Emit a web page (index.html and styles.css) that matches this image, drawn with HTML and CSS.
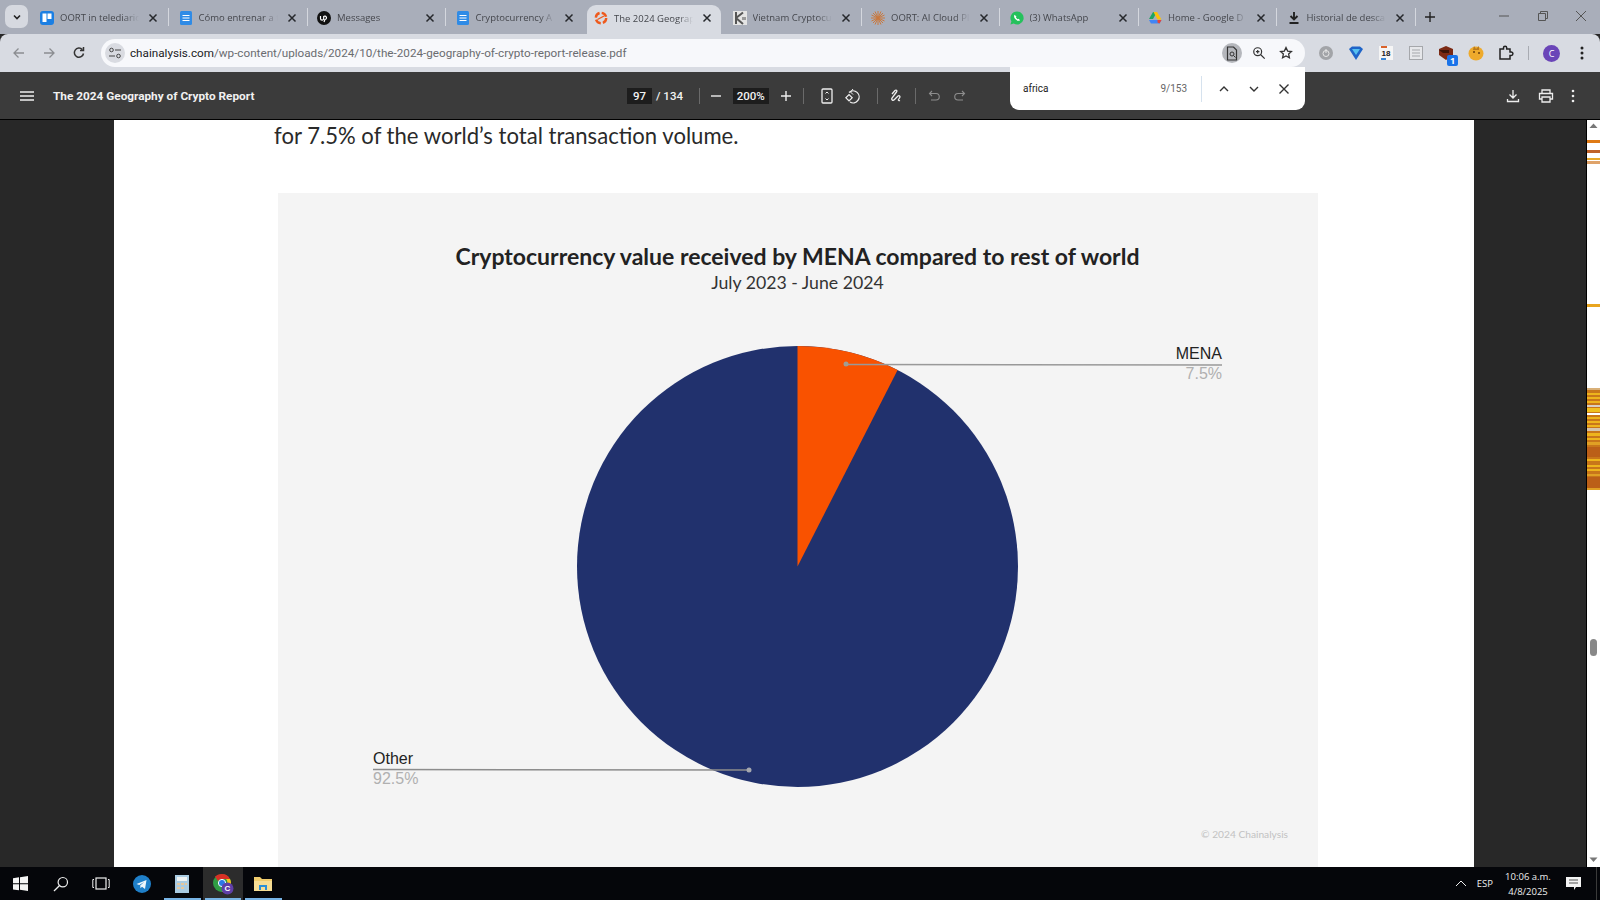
FILE: index.html
```html
<!DOCTYPE html>
<html lang="es">
<head>
    <meta charset="UTF-8">
    <title>The 2024 Geography of Crypto Report</title>
    <link rel="stylesheet" href="styles.css">
</head>
<body>

    <svg class="defs"><symbol id="close" viewBox="0 0 10 10"><path d="M1.500 1.500l7 7M8.500 1.500l-7 7" stroke="#26282c" stroke-width="1.500"/></symbol></svg>

    <!-- Tabs -->
    <div class="tabstrip">
        <div class="tab-search"><svg width="12" height="12" viewBox="0 0 12 12"><path d="M3 4.500l3 3 3-3" fill="none" stroke="#222" stroke-width="1.600"/></svg></div>
        <div class="tab">
            <svg class="fav" viewBox="0 0 14 14"><rect width="14" height="14" rx="3" fill="#1b7fe3"/><rect x="2.500" y="2.500" width="4" height="8.500" fill="#fff"/><rect x="7.500" y="2.500" width="4" height="5.500" fill="#fff"/></svg>
            <span class="tab-title">OORT in telediario</span><svg class="tab-x"><use href="#close"/></svg>
        </div>
        <div class="tab">
            <svg class="fav" viewBox="0 0 14 14"><rect x="1" width="12" height="14" rx="1.500" fill="#2f8be6"/><path d="M3.500 4.500h7M3.500 7h7M3.500 9.500h7" stroke="#fff" stroke-width="1.200"/></svg>
            <span class="tab-title">Cómo entrenar a t</span><svg class="tab-x"><use href="#close"/></svg>
        </div>
        <div class="tab">
            <svg class="fav" viewBox="0 0 14 14"><circle cx="7" cy="7" r="7" fill="#111"/><path d="M3.500 5v2.500a1.600 1.600 0 0 0 3.200 0V5.500a1.700 1.700 0 1 1 1.200 3L7 11" fill="none" stroke="#fff" stroke-width="1.200"/></svg>
            <span class="tab-title">Messages</span><svg class="tab-x"><use href="#close"/></svg>
        </div>
        <div class="tab">
            <svg class="fav" viewBox="0 0 14 14"><rect x="1" width="12" height="14" rx="1.500" fill="#2f8be6"/><path d="M3.500 4.500h7M3.500 7h7M3.500 9.500h7" stroke="#fff" stroke-width="1.200"/></svg>
            <span class="tab-title">Cryptocurrency A</span><svg class="tab-x"><use href="#close"/></svg>
        </div>
        <div class="tab active">
            <svg class="fav" viewBox="0 0 14 14"><circle cx="7" cy="7" r="5.200" fill="none" stroke="#ee5a1d" stroke-width="2.400" stroke-dasharray="6 2.200"/><path d="M3.500 8.500L10 5" stroke="#ee5a1d" stroke-width="1.400"/></svg>
            <span class="tab-title">The 2024 Geograp</span><svg class="tab-x"><use href="#close"/></svg>
        </div>
        <div class="tab">
            <svg class="fav" viewBox="0 0 14 14"><rect width="14" height="14" fill="#e4e4e4"/><path d="M3 1v12M3 7l7-5.500M3 7l7 6" stroke="#555" stroke-width="2"/><rect x="9" y="6" width="4" height="3" fill="#999"/></svg>
            <span class="tab-title">Vietnam Cryptocu</span><svg class="tab-x"><use href="#close"/></svg>
        </div>
        <div class="tab">
            <svg class="fav" viewBox="0 0 14 14"><path d="M7 0v14M0 7h14M2 2l10 10M12 2L2 12M4 .5l6 13M10 .5l-6 13M.5 4l13 6M.5 10l13-6" stroke="#c9793f" stroke-width="1"/></svg>
            <span class="tab-title">OORT: AI Cloud Pl</span><svg class="tab-x"><use href="#close"/></svg>
        </div>
        <div class="tab">
            <svg class="fav" viewBox="0 0 14 14"><path d="M7 .5a6.500 6.500 0 0 0-5.600 9.800L.5 13.500l3.300-.9A6.500 6.500 0 1 0 7 .5z" fill="#25c15c"/><path d="M4.600 3.800c-1 1 -.6 2.800 1 4.500s3.500 2 4.400 1l-1.400-1.500-1 .5-1.700-1.700.5-1z" fill="#fff"/></svg>
            <span class="tab-title">(3) WhatsApp</span><svg class="tab-x"><use href="#close"/></svg>
        </div>
        <div class="tab">
            <svg class="fav" viewBox="0 0 14 14"><path d="M5 1h4l-4 7H1z" fill="#1fa463"/><path d="M9 1l4.500 7.500h-4L5.500 1z" fill="#ffc107"/><path d="M1 9h12.500l-2 3.500H3z" fill="#4285f4"/><path d="M9.500 9h4l-2 3.500-2-1z" fill="#ea4335"/></svg>
            <span class="tab-title">Home - Google D</span><svg class="tab-x"><use href="#close"/></svg>
        </div>
        <div class="tab">
            <svg class="fav" viewBox="0 0 14 14"><path d="M7 1v7M3.500 5L7 8.500 10.500 5M2.500 12h9" fill="none" stroke="#222" stroke-width="1.900"/></svg>
            <span class="tab-title">Historial de desca</span><svg class="tab-x"><use href="#close"/></svg>
        </div>
        <div class="tab-new">
            <svg width="12" height="12" viewBox="0 0 12 12"><path d="M6 1v10M1 6h10" stroke="#222" stroke-width="1.400"/></svg>
        </div>
        <div class="win-controls">
            <svg width="12" height="12" viewBox="0 0 12 12"><path d="M1 6h10" stroke="#555"/></svg>
            <svg width="12" height="12" viewBox="0 0 12 12"><path d="M1.500 3.500h7v7h-7zM3.500 3.500v-2h7v7h-2" fill="none" stroke="#555"/></svg>
            <svg width="12" height="12" viewBox="0 0 12 12"><path d="M1 1l10 10M11 1L1 11" stroke="#555"/></svg>
        </div>
    </div>

    <!-- Address bar -->
    <div class="toolbar">
        <div class="nav-btn"><svg width="14" height="14" viewBox="0 0 14 14"><path d="M12 7H2M6.500 2.500L2 7l4.500 4.500" fill="none" stroke="#8b8d91" stroke-width="1.300"/></svg></div>
        <div class="nav-btn"><svg width="14" height="14" viewBox="0 0 14 14"><path d="M2 7h10M7.500 2.500L12 7l-4.500 4.500" fill="none" stroke="#8b8d91" stroke-width="1.300"/></svg></div>
        <div class="nav-btn"><svg width="14" height="14" viewBox="0 0 14 14"><path d="M11.500 7.500A4.600 4.600 0 1 1 10.300 3.500M11.500 1v3.500H8" fill="none" stroke="#333" stroke-width="1.500"/></svg></div>
        <div class="omnibox">
            <div class="site-info"><svg width="14" height="12" viewBox="0 0 14 12"><circle cx="3.500" cy="3" r="1.800" fill="none" stroke="#444"/><path d="M7 3h6M1 9h6" stroke="#444" stroke-width="1.200"/><circle cx="10.500" cy="9" r="1.800" fill="none" stroke="#444"/></svg></div>
            <div class="url"><span>chainalysis.com</span>/wp-content/uploads/2024/10/the-2024-geography-of-crypto-report-release.pdf</div>
            <div class="omni-pdf"><svg width="14" height="15" viewBox="0 0 14 15"><path d="M2.500 1h6l3 3v10h-9z" fill="none" stroke="#333" stroke-width="1.200"/><circle cx="7" cy="8" r="2" fill="none" stroke="#333"/><path d="M8.500 9.500l2 2" stroke="#333"/></svg></div>
            <div class="omni-icon"><svg width="14" height="14" viewBox="0 0 16 16"><circle cx="6.500" cy="6.500" r="4.500" fill="none" stroke="#333" stroke-width="1.400"/><path d="M10 10l4.500 4.500M4.500 6.500h4M6.500 4.500v4" stroke="#333" stroke-width="1.400"/></svg></div>
            <div class="omni-icon"><svg width="14" height="14" viewBox="0 0 16 16"><path d="M8 1.800l1.900 4 4.300.500-3.200 2.900.9 4.300L8 11.300l-3.900 2.200.9-4.300-3.200-2.900 4.300-.500z" fill="none" stroke="#333" stroke-width="1.500"/></svg></div>
        </div>
        <div class="ext-row">
            <div class="ext"><svg width="16" height="16" viewBox="0 0 16 16"><circle cx="8" cy="8" r="7" fill="#a2a4a8"/><circle cx="8" cy="8.500" r="3" fill="none" stroke="#e8e8e8"/><path d="M8 4v4" stroke="#e8e8e8"/></svg></div>
            <div class="ext"><svg width="16" height="16" viewBox="0 0 16 16"><path d="M1 4l3-2.500h8L15 4 8 15z" fill="#1f64c8"/><path d="M4 4h8L8 10z" fill="#56c0f0"/></svg></div>
            <div class="ext"><svg width="16" height="16" viewBox="0 0 16 16"><rect x="1" y="1" width="14" height="14" fill="#f5f5f5"/><rect x="3" y="1" width="6" height="2" fill="#d9622b"/><rect x="3" y="13" width="5" height="2" fill="#3b86d6"/><text x="8" y="11" class="ext-num">18</text></svg></div>
            <div class="ext"><svg width="16" height="16" viewBox="0 0 16 16"><rect x="1.500" y="1.500" width="13" height="13" fill="#e6e7ea" stroke="#a5a7ab"/><path d="M4 5h8M4 8h8M4 11h8" stroke="#a5a7ab"/></svg></div>
            <div class="ext ext-badged"><svg width="16" height="16" viewBox="0 0 16 16"><path d="M1 4l7-3 7 3v6l-7 5-7-5z" fill="#7c2a14"/><path d="M1 5h10v3H5z" fill="#3b1509"/></svg><span class="ext-badge">1</span></div>
            <div class="ext"><svg width="18" height="18" viewBox="0 0 18 18"><ellipse cx="9" cy="9.500" rx="7.500" ry="7" fill="#eeaa2c"/><path d="M7 2l2 3 3-3v4H6z" fill="#b9791b"/><circle cx="7" cy="8" r="1" fill="#6b3f0c"/><circle cx="12" cy="9" r="1" fill="#6b3f0c"/></svg></div>
            <div class="ext"><svg width="16" height="16" viewBox="0 0 16 16"><path d="M2 4h3.500V2.800a1.600 1.600 0 0 1 3.200 0V4H12v3h1.200a1.700 1.700 0 0 1 0 3.400H12V14H2z" fill="none" stroke="#222" stroke-width="1.500"/></svg></div>
            <div class="ext-sep"></div>
            <div class="avatar">C</div>
            <svg class="ext-dots" width="4" height="14" viewBox="0 0 4 14"><circle cx="2" cy="2" r="1.500" fill="#222"/><circle cx="2" cy="7" r="1.500" fill="#222"/><circle cx="2" cy="12" r="1.500" fill="#222"/></svg>
        </div>
    </div>

    <!-- PDF viewer toolbar -->
    <div class="pdfbar">
        <div class="pdf-left">
            <svg class="pdf-menu" width="14" height="10" viewBox="0 0 14 10"><path d="M0 1h14M0 5h14M0 9h14" stroke="#f1f1f1" stroke-width="1.400"/></svg>
            <span class="pdf-title">The 2024 Geography of Crypto Report</span>
        </div>
        <div class="pdf-center">
            <span class="pdf-input page-input">97</span>
            <span class="pdf-pages">/ 134</span>
            <span class="pdf-sep"></span>
            <svg class="pdf-ic ic-minus" width="12" height="12" viewBox="0 0 12 12"><path d="M1 6h10" stroke="#eee" stroke-width="1.400"/></svg>
            <span class="pdf-input zoom-input">200%</span>
            <svg class="pdf-ic ic-plus" width="12" height="12" viewBox="0 0 12 12"><path d="M1 6h10M6 1v10" stroke="#eee" stroke-width="1.400"/></svg>
            <span class="pdf-sep sep-b"></span>
            <svg class="pdf-ic ic-fit" width="12" height="16" viewBox="0 0 12 16"><rect x="1" y="1" width="10" height="14" rx="1" fill="none" stroke="#eee" stroke-width="1.300"/><path d="M4.500 5.500L6 4l1.500 1.500M4.500 10.500L6 12l1.500-1.500" fill="none" stroke="#eee"/></svg>
            <svg class="pdf-ic ic-rotate" width="16" height="16" viewBox="0 0 16 16"><path d="M4 4.500A6 6 0 1 1 5 14" fill="none" stroke="#eee" stroke-width="1.300"/><path d="M8 1L5.500 4 8 6.500" fill="none" stroke="#eee"/><rect x="1.800" y="7.500" width="4.500" height="4.500" transform="rotate(45 4 9.750)" fill="none" stroke="#eee" stroke-width="1.200"/></svg>
            <span class="pdf-sep sep-c"></span>
            <svg class="pdf-ic ic-draw" width="14" height="14" viewBox="0 0 14 14"><path d="M3 5l3-3.500c1-1 2.500 0 1.500 1.500L3 9c-1 2 1 3 2.500 1.500L9 7c1.500-1 2.500.5 1.500 2l-1 1.500c-.5 1 .5 1.500 1.500 1" fill="none" stroke="#eee" stroke-width="1.300"/></svg>
            <span class="pdf-sep sep-d"></span>
            <svg class="pdf-ic ic-undo" width="12" height="12" viewBox="0 0 12 12"><path d="M4 1L1.500 3.500 4 6M1.500 3.500H8a3 3 0 0 1 0 6.500H3" fill="none" stroke="#8d8d8d" stroke-width="1.100"/></svg>
            <svg class="pdf-ic ic-redo" width="12" height="12" viewBox="0 0 12 12"><path d="M8 1l2.500 2.500L8 6M10.500 3.500H4a3 3 0 0 0 0 6.500h5" fill="none" stroke="#8d8d8d" stroke-width="1.100"/></svg>
        </div>
        <div class="pdf-right">
            <svg width="14" height="14" viewBox="0 0 14 14"><path d="M7 1v8M3.500 5.500L7 9l3.500-3.500M1.500 10v2.500h11V10" fill="none" stroke="#eee" stroke-width="1.300"/></svg>
            <svg width="16" height="14" viewBox="0 0 16 14"><path d="M4 4V1h8v3M4 10H1.500V4.500h13V10H12M4 8h8v5H4z" fill="none" stroke="#eee" stroke-width="1.300"/></svg>
            <svg width="4" height="14" viewBox="0 0 4 14"><circle cx="2" cy="2" r="1.300" fill="#eee"/><circle cx="2" cy="7" r="1.300" fill="#eee"/><circle cx="2" cy="12" r="1.300" fill="#eee"/></svg>
        </div>
    </div>

    <!-- Find in page -->
    <div class="findbar">
        <span class="find-text">africa</span>
        <span class="find-count">9/153</span>
        <span class="find-sep"></span>
        <svg width="12" height="12" viewBox="0 0 12 12"><path d="M2 8l4-4 4 4" fill="none" stroke="#333" stroke-width="1.400"/></svg>
        <svg width="12" height="12" viewBox="0 0 12 12"><path d="M2 4l4 4 4-4" fill="none" stroke="#333" stroke-width="1.400"/></svg>
        <svg width="12" height="12" viewBox="0 0 12 12"><path d="M1.500 1.500l9 9M10.500 1.500l-9 9" stroke="#333" stroke-width="1.400"/></svg>
    </div>

    <!-- Document -->
    <div class="viewer">
        <div class="gutter-left"></div>
        <div class="page">
            <p class="page-text">for 7.5% of the world’s total transaction volume.</p>
            <div class="chart">
                <h3 class="chart-title">Cryptocurrency value received by MENA compared to rest of world</h3>
                <p class="chart-sub">July 2023 - June 2024</p>
                <svg class="chart-svg" width="1040" height="560" viewBox="0 0 1040 560">
                    <circle cx="519.500" cy="267.500" r="220.500" fill="#21316d"/>
                    <path d="M519.500 267.500V47A220.500 220.500 0 0 1 619.600 71z" fill="#f95200"/>
                    <path d="M568 65.500L944 66" stroke="#999" stroke-width="1.400"/>
                    <circle cx="568" cy="65" r="2.500" fill="#a09d93"/>
                    <text x="944" y="60" class="lbl-name" text-anchor="end">MENA</text>
                    <text x="944" y="80" class="lbl-val" text-anchor="end">7.5%</text>
                    <path d="M95 470.500L471 471" stroke="#8c8c8c" stroke-width="1.400"/>
                    <circle cx="471" cy="471" r="2.500" fill="#a5a8b0"/>
                    <text x="95" y="465" class="lbl-name">Other</text>
                    <text x="95" y="485" class="lbl-val">92.5%</text>
                    <text x="1010" y="539" class="chart-copy" text-anchor="end">© 2024 Chainalysis</text>
                </svg>
            </div>
        </div>
        <div class="gutter-right"></div>
        <div class="scrollbar">
            <svg class="scroll-svg" width="13" height="747" viewBox="0 0 13 747">
                <path d="M6.500 3.500l4 4.500h-8z" fill="#777"/>
                <path d="M6.500 742l4-4.500h-8z" fill="#777"/>
                <rect y="20" width="13" height="3" fill="#df7a16"/>
                <rect y="30" width="13" height="3" fill="#c0632a"/>
                <rect y="38" width="13" height="2" fill="#e8a92a"/>
                <rect y="41" width="13" height="3" fill="#dfa36a"/>
                <rect y="184" width="13" height="3" fill="#e9a51f"/>
                <!-- matches block further down the document -->
                <rect y="268" width="13" height="102" fill="#c8761a"/>
                <rect y="268" width="13" height="2" fill="#d9b078"/>
                <rect y="273" width="13" height="2" fill="#eeb41c"/>
                <rect y="277" width="13" height="2" fill="#eeb41c"/>
                <rect y="281" width="13" height="2" fill="#eeb41c"/>
                <rect y="285" width="13" height="2" fill="#d8cfc2"/>
                <rect y="288" width="13" height="4" fill="#f0c020"/>
                <rect y="293" width="13" height="2" fill="#fff"/>
                <rect y="297" width="13" height="2" fill="#eeb41c"/>
                <rect y="301" width="13" height="2" fill="#eeb41c"/>
                <rect y="305" width="13" height="2" fill="#eeb41c"/>
                <rect y="308" width="13" height="3" fill="#d4c4ae"/>
                <rect y="313" width="13" height="3" fill="#eeb41c"/>
                <rect y="318" width="13" height="2" fill="#eeb41c"/>
                <rect y="322" width="13" height="3" fill="#e0a024"/>
                <rect y="327" width="13" height="10" fill="#bb5f18"/>
                <rect y="339" width="13" height="2" fill="#eeb41c"/>
                <rect y="345" width="13" height="2" fill="#eeb41c"/>
                <rect y="349" width="13" height="2" fill="#eeb41c"/>
                <rect y="354" width="13" height="2" fill="#e0a024"/>
                <rect y="357" width="13" height="11" fill="#bb5f18"/>
                <rect y="368" width="13" height="2" fill="#e0a024"/>
                <rect x="3" y="519" width="7" height="17" rx="3.500" fill="#888"/>
            </svg>
        </div>
    </div>

    <!-- Windows taskbar -->
    <div class="taskbar">
        <div class="task-btn"><svg width="15" height="15" viewBox="0 0 15 15"><path d="M0 2.200l6-.9v6H0zM7 1.200L15 0v7.300H7zM0 8.300h6v6l-6-.9zM7 8.300h8V15l-8-1.200z" fill="#f5f5f5"/></svg></div>
        <div class="task-btn"><svg width="16" height="16" viewBox="0 0 16 16"><circle cx="9.800" cy="6.200" r="4.700" fill="none" stroke="#eee" stroke-width="1.200"/><path d="M6.300 9.700L1 15" stroke="#eee" stroke-width="1.300"/></svg></div>
        <div class="task-btn"><svg width="18" height="13" viewBox="0 0 18 13"><rect x="4" y="1" width="10" height="11" fill="none" stroke="#eee" stroke-width="1.200"/><path d="M2 2.500H.8v8H2M16 2.500h1.200v8H16" fill="none" stroke="#eee"/></svg></div>
        <div class="task-btn"><svg width="18" height="18" viewBox="0 0 18 18"><circle cx="9" cy="9" r="9" fill="#1f7fc9"/><path d="M3.500 9l10-4-1.500 9-3-2.200-1.500 1.500-.3-2.800 4-3.500-5 3z" fill="#f0f6fb"/></svg></div>
        <div class="task-btn task-open"><svg width="14" height="18" viewBox="0 0 14 18"><rect width="14" height="18" fill="#a9cbe2"/><rect x="2" y="2" width="10" height="4" fill="#eef2f2"/><path d="M2 8h3v2H2zM6 8h3v2H6zM10 8h2v2h-2zM2 12h3v2H2zM6 12h3v2H6z" fill="#e5c79e"/></svg></div>
        <div class="task-btn task-open task-active">
            <svg width="22" height="22" viewBox="0 0 22 22"><circle cx="10" cy="10" r="9" fill="#2f9e44"/><path d="M10 1a9 9 0 0 1 8 5H10a4 4 0 0 0-4 2L3 3.500A9 9 0 0 1 10 1z" fill="#d93025"/><path d="M18 6a9 9 0 0 1-8 13l4-7a4 4 0 0 0 0-6z" fill="#f8c31a"/><circle cx="10" cy="10" r="3.600" fill="#2c79e6" stroke="#fff" stroke-width="1"/><circle cx="15.500" cy="15.500" r="6" fill="#5f3fa8"/><text x="15.500" y="18.300" class="chrome-c" text-anchor="middle">C</text></svg>
        </div>
        <div class="task-btn task-open"><svg width="18" height="16" viewBox="0 0 18 16"><path d="M0 1h6l2 2h10v12H0z" fill="#f0cc6d"/><rect y="5" width="18" height="10" fill="#f7dd94"/><path d="M5 9h8v5h-2v-3H7v3H5z" fill="#2a8fd8"/></svg></div>
        <div class="tray">
            <svg width="12" height="7" viewBox="0 0 12 7"><path d="M1 6l5-5 5 5" fill="none" stroke="#eee"/></svg>
            <span class="tray-lang">ESP</span>
            <div class="tray-clock"><span>10:06 a.m.</span><span>4/8/2025</span></div>
            <svg class="tray-note" width="15" height="14" viewBox="0 0 15 14"><path d="M0 0h15v10h-5l-2 3V10H0z" fill="#f4f4f4"/><path d="M3 3h9M3 6h9" stroke="#555"/></svg>
            <span class="tray-peek"></span>
        </div>
    </div>

</body>
</html>
```
FILE: styles.css
```css
/* Browser window */
html, body {
    margin: 0;
    height: 100%;
}
body {
    position: relative;
    width: 1600px;
    height: 900px;
    overflow: hidden;
    display: flex;
    flex-direction: column;
    font-family: "Open Sans", "Liberation Sans", sans-serif;
    background-color: #282828;
}
.defs {
    display: none;
}

/* Tabs */
.tabstrip {
    height: 34px;
    flex: none;
    display: flex;
    align-items: center;
    background-color: #a9aeba;
    padding-left: 5px;
    box-sizing: border-box;
}
.tab-search {
    width: 23px;
    height: 23px;
    margin-right: 2.500px;
    margin-top: -1px;
    border-radius: 7px;
    background-color: #d6d9e0;
    display: flex;
    align-items: center;
    justify-content: center;
}
.tab {
    position: relative;
    width: 138.500px;
    height: 34px;
    flex: none;
    box-sizing: border-box;
    padding: 1px 0 0 9.500px;
    display: flex;
    align-items: center;
}
.tab::after {
    content: "";
    position: absolute;
    right: 0;
    top: 8px;
    bottom: 8px;
    width: 1px;
    background-color: #d4d7de;
}
.tab:nth-child(5)::after, .tab.active::after {
    display: none;
}
.tab.active {
    width: 133.500px;
    height: 29px;
    margin: 5px 2.500px 0;
    padding: 0 0 3px 7px;
    background-color: #d8dbe2;
    border-radius: 9px 9px 0 0;
}
.fav {
    width: 14px;
    height: 14px;
    flex: none;
}
.tab-title {
    margin-left: 6px;
    width: 84px;
    flex: none;
    font-size: 9.500px;
    color: #45474d;
    white-space: nowrap;
    overflow: hidden;
    -webkit-mask-image: linear-gradient(to right, #000 76%, transparent 94%);
    mask-image: linear-gradient(to right, #000 76%, transparent 94%);
}
.tab-x {
    width: 10px;
    height: 10px;
    flex: none;
    margin-left: 4px;
}
.tab-new {
    margin: -1px 0 0 8px;
    display: flex;
}
.win-controls {
    margin: -2px 0 0 auto;
    width: 89px;
    padding-right: 13px;
    display: flex;
    justify-content: space-between;
}

/* Address bar */
.toolbar {
    height: 38px;
    flex: none;
    display: flex;
    align-items: center;
    background-color: #d8dbe2;
    border-radius: 8px 8px 0 0;
    box-sizing: border-box;
    padding-left: 4px;
}
.nav-btn {
    width: 30px;
    display: flex;
    justify-content: center;
}
.omnibox {
    margin-left: 7px;
    width: 1204px;
    height: 28px;
    flex: none;
    border-radius: 14px;
    background-color: #f7f8fb;
    display: flex;
    align-items: center;
}
.site-info {
    width: 20px;
    height: 20px;
    margin-left: 4px;
    border-radius: 50%;
    background-color: #d9dbe1;
    display: flex;
    align-items: center;
    justify-content: center;
}
.url {
    margin-left: 5px;
    font-family: "Roboto", sans-serif;
    font-size: 11.700px;
    color: #6a6c70;
    white-space: nowrap;
}
.url span {
    color: #202124;
}
.omni-pdf {
    margin-left: auto;
    width: 20px;
    height: 20px;
    border-radius: 50%;
    background-color: #b5b7bc;
    display: flex;
    align-items: center;
    justify-content: center;
}
.omni-icon {
    width: 27px;
    margin-left: 3px;
    display: flex;
    justify-content: center;
}
.omni-icon:last-child {
    margin-right: 6px;
    margin-left: 0;
}
.ext-row {
    flex: 1;
    padding-left: 6px;
    display: flex;
    align-items: center;
}
.ext {
    position: relative;
    width: 30px;
    display: flex;
    justify-content: center;
}
.ext-num {
    font-family: "Liberation Sans", sans-serif;
    font-size: 8px;
    font-weight: bold;
    text-anchor: middle;
    fill: #222;
}
.ext-badge {
    position: absolute;
    right: 3px;
    bottom: -5px;
    width: 11px;
    height: 11px;
    border-radius: 2px;
    background-color: #1a73e8;
    color: #fff;
    font-size: 9px;
    font-weight: bold;
    line-height: 11px;
    text-align: center;
}
.ext-sep {
    width: 1px;
    height: 14px;
    margin: 0 14px 0 7px;
    background-color: #a8abb2;
}
.avatar {
    width: 17px;
    height: 17px;
    border-radius: 50%;
    background-color: #6a45b8;
    color: #fff;
    font-size: 9px;
    line-height: 17px;
    text-align: center;
}
.ext-dots {
    margin-left: 20px;
}

/* PDF toolbar */
.pdfbar {
    height: 47px;
    flex: none;
    position: relative;
    display: flex;
    align-items: center;
    background-color: #3b3b3b;
    color: #f1f1f1;
    font-family: "Roboto", sans-serif;
    font-size: 11.500px;
}
.pdf-left {
    width: 627px;
    flex: none;
    display: flex;
    align-items: center;
    padding-left: 20px;
    box-sizing: border-box;
}
.pdf-title {
    margin-left: 19px;
    font-weight: 700;
    font-size: 11.800px;
}
.pdf-center {
    display: flex;
    align-items: center;
}
.pdf-input {
    height: 16px;
    line-height: 16px;
    text-align: center;
    background-color: #1d1d1d;
    font-weight: 500;
}
.page-input {
    width: 25px;
}
.pdf-pages {
    margin-left: 4px;
    width: 43px;
    font-weight: 500;
}
.pdf-sep {
    width: 1px;
    height: 16px;
    flex: none;
    background-color: #6a6a6a;
}
.pdf-ic {
    flex: none;
}
.ic-minus { margin-left: 10px; }
.zoom-input {
    width: 36.500px;
    margin-left: 10.500px;
}
.ic-plus { margin-left: 11px; }
.sep-b { margin-left: 11px; }
.ic-fit { margin-left: 16.500px; }
.ic-rotate { margin-left: 12.500px; }
.sep-c { margin-left: 15.500px; }
.ic-draw { margin-left: 11.500px; }
.sep-d { margin-left: 12px; }
.ic-undo { margin-left: 12px; }
.ic-redo { margin-left: 14px; }
.pdf-right {
    margin-left: auto;
    width: 69px;
    padding-right: 25px;
    display: flex;
    align-items: center;
    justify-content: space-between;
}

/* Find bar sits over the toolbar and the page */
.findbar {
    position: absolute;
    left: 1010px;
    top: 67px;
    width: 295px;
    height: 43px;
    box-sizing: border-box;
    display: flex;
    align-items: center;
    padding: 0 15px 0 13px;
    background-color: #fff;
    border-radius: 0 0 9px 9px;
    font-family: "Roboto", sans-serif;
    font-size: 10px;
}
.findbar svg {
    margin-left: 18px;
}
.find-text {
    color: #222;
    width: 120px;
}
.find-count {
    margin-left: auto;
    color: #666;
    margin-right: 14px;
}
.find-sep {
    width: 1px;
    height: 26px;
    background-color: #d6e2ee;
    margin-right: -2px;
}

/* Document */
.viewer {
    flex: 1;
    min-height: 0;
    display: flex;
    background-color: #282828;
    border-top: 1px solid #000;
}
.gutter-left {
    width: 114px;
    flex: none;
}
.gutter-right {
    flex: 1;
    border-right: 1px solid #000;
}
.page {
    width: 1360px;
    flex: none;
    background-color: #fff;
    padding: 0 0 0 160px;
    box-sizing: border-box;
    overflow: hidden;
}
.page-text {
    margin: 0;
    padding-top: 1px;
    height: 73px;
    box-sizing: border-box;
    font-family: "Lato", sans-serif;
    font-size: 22.100px;
    line-height: 30px;
    color: #2a2a2a;
}
.chart {
    margin-left: 3.500px;
    width: 1040px;
    height: 700px;
    background-color: #f4f4f4;
    display: flex;
    flex-direction: column;
    align-items: center;
}
.chart-title {
    margin: 48px 0 0;
    font-family: "Lato", sans-serif;
    font-size: 23px;
    line-height: 30px;
    font-weight: 700;
    color: #222;
}
.chart-sub {
    margin: 0;
    font-family: "Lato", sans-serif;
    font-size: 17.700px;
    line-height: 24px;
    color: #333;
}
.chart-svg {
    margin-top: 4px;
    flex: none;
}
.lbl-name {
    font-family: "Liberation Sans", sans-serif;
    font-size: 16px;
    fill: #222;
}
.lbl-val {
    font-family: "Liberation Sans", sans-serif;
    font-size: 16px;
    fill: #b0b0b0;
}
.chart-copy {
    font-family: "Lato", sans-serif;
    font-size: 10.200px;
    fill: #c2c2c2;
}
.scrollbar {
    width: 13px;
    flex: none;
    background-color: #fff;
}
.scroll-svg {
    display: block;
}

/* Windows taskbar */
.taskbar {
    height: 33px;
    flex: none;
    display: flex;
    align-items: center;
    background-color: #05060a;
    color: #eee;
    font-family: "Open Sans", sans-serif;
    font-size: 9.500px;
}
.task-btn {
    position: relative;
    width: 40.500px;
    height: 33px;
    flex: none;
    display: flex;
    align-items: center;
    justify-content: center;
}
.task-open::after {
    content: "";
    position: absolute;
    left: 2px;
    right: 2px;
    bottom: 0;
    height: 2px;
    background-color: #78b4e6;
}
.task-active {
    background-color: #2c2c2c;
}
.chrome-c {
    font-family: "Liberation Sans", sans-serif;
    font-size: 8px;
    font-weight: bold;
    fill: #fff;
}
.tray {
    margin-left: auto;
    display: flex;
    align-items: center;
}
.tray-lang {
    margin-left: 10px;
}
.tray-clock {
    margin-left: 5px;
    width: 60px;
    display: flex;
    flex-direction: column;
    align-items: center;
    line-height: 15px;
}
.tray-note {
    margin-left: 8px;
}
.tray-peek {
    width: 1px;
    height: 33px;
    margin-left: 15px;
    margin-right: 3px;
    background-color: #3a3a3a;
}
```
